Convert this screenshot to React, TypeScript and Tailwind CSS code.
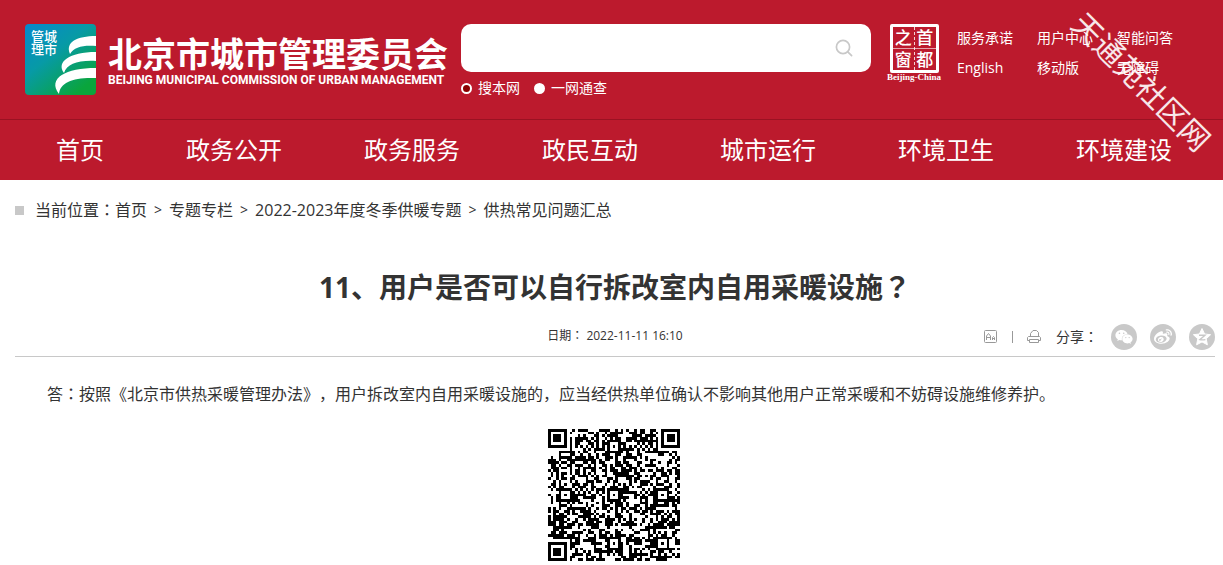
import React from "react";
import { FaWeibo, FaWeixin } from "react-icons/fa";

const NAV = ["首页", "政务公开", "政务服务", "政民互动", "城市运行", "环境卫生", "环境建设"];
const LINKS = ["服务承诺", "用户中心", "智能问答", "English", "移动版", "无障碍"];
const CRUMBS = ["首页", "专题专栏", "2022-2023年度冬季供暖专题", "供热常见问题汇总"];

const QR_SIZE = 49;
const ALIGN = [6, 24, 42];

function finderAt(x: number, y: number, fx: number, fy: number): boolean | null {
  const dx = x - fx;
  const dy = y - fy;
  if (dx < -1 || dx > 7 || dy < -1 || dy > 7) return null;
  const d = Math.max(Math.abs(dx - 3), Math.abs(dy - 3));
  return d === 3 || d < 2;
}

function buildQr(): string {
  let seed = 20221111;
  const cells: string[] = [];
  for (let y = 0; y < QR_SIZE; y++) {
    for (let x = 0; x < QR_SIZE; x++) {
      seed = (Math.imul(seed, 1664525) + 1013904223) >>> 0;
      let dark = (seed >>> 16) % 100 < 51;
      if (x === 6) dark = y % 2 === 0;
      if (y === 6) dark = x % 2 === 0;
      for (const ax of ALIGN) {
        for (const ay of ALIGN) {
          const d = Math.max(Math.abs(x - ax), Math.abs(y - ay));
          if (d <= 2) dark = d !== 1;
        }
      }
      for (const [fx, fy] of [[0, 0], [QR_SIZE - 7, 0], [0, QR_SIZE - 7]]) {
        const f = finderAt(x, y, fx, fy);
        if (f !== null) dark = f;
      }
      if (dark) cells.push(`M${x} ${y}h1v1h-1z`);
    }
  }
  return cells.join("");
}

const QR_PATH = buildQr();

// Full-width colons and question marks sit in the middle of their cell.
function Centered({ children }: { children: string }) {
  return <span className="font-['Noto_Sans_CJK_TC',sans-serif] leading-none">{children}</span>;
}

function Emblem() {
  return (
    <svg viewBox="0 0 71 71" className="size-[71px] shrink-0" aria-hidden="true">
      <defs>
        <linearGradient id="emblem" x1="0" y1="0" x2="0.8" y2="1">
          <stop offset="0" stopColor="#0787cd" />
          <stop offset="0.45" stopColor="#079aa6" />
          <stop offset="0.95" stopColor="#0aa53c" />
        </linearGradient>
        <clipPath id="emblem-clip">
          <rect width="71" height="71" rx="4" />
        </clipPath>
      </defs>
      <g clipPath="url(#emblem-clip)">
        <rect width="71" height="71" fill="url(#emblem)" />
        <g fill="#fff">
          <path d="M45 30C40 18 52 12 71 12V22C58 21 49 23 45 30Z" />
          <path d="M39 49C31 38 44 28 71 28V37C53 36 42 40 39 49Z" />
          <path d="M34 70C22 54 41 44 71 44V54C49 53 35 58 34 70Z" />
        </g>
      </g>
      <g fill="#fff" fontSize="13" fontWeight="500" fontFamily="'Noto Sans CJK SC', sans-serif">
        <text x="6" y="17">管城</text>
        <text x="6" y="30">理市</text>
      </g>
    </svg>
  );
}

function Seal() {
  return (
    <a href="#" className="flex w-14 shrink-0 flex-col items-center text-white">
      <span className="relative grid size-[49px] grid-cols-2 place-items-center rounded-xs border-3 border-white text-[17px] leading-[21px] font-medium">
        <span>之</span>
        <span>首</span>
        <span>窗</span>
        <span>都</span>
        <span className="absolute inset-y-0 left-[21px] border-l border-dashed border-white/80" />
        <span className="absolute inset-x-0 top-[21px] border-t border-white/60" />
      </span>
      <span className="font-['Liberation_Serif',serif] text-[9px] leading-2 font-bold whitespace-nowrap">Beijing-China</span>
    </a>
  );
}

function FontSizeIcon() {
  return (
    <svg viewBox="0 0 14 14" className="size-[14px]" fill="none" stroke="#999">
      <rect x="0.5" y="0.5" width="12" height="12" rx="1" />
      <path d="M2.5 10V6L4.5 3.5L6.5 6V10M2.5 7.5H6.5M8.5 10V7.5L9.5 6.5L10.5 7.5V10M8.5 8.5H10.5" />
    </svg>
  );
}

function PrintIcon() {
  return (
    <svg viewBox="0 0 14 14" className="size-[14px]" fill="none" stroke="#999">
      <path d="M3.5 6.5V3.5L6 0.5H9.5L11.5 2.5V6.5M1.5 6.5H12.5L13.5 7.5V10.5H11.5M1.5 6.5L0.5 7.5V10.5H2.5M2.5 9.5H11.5V12.5H2.5Z" />
    </svg>
  );
}

function QzoneIcon() {
  return (
    <svg viewBox="0 0 20 20" className="size-[20px]">
      <path
        d="M10 1.5L12.6 7L18.6 7.7L14.2 11.8L15.4 17.8L10 14.9L4.6 17.8L5.8 11.8L1.4 7.7L7.4 7Z"
        fill="#fff"
        stroke="#fff"
        strokeLinejoin="round"
      />
      <path d="M7 8.2H13L7.8 12.6Q10 13.2 13.4 12.6" fill="none" stroke="#c9c9c9" strokeWidth="1.4" />
    </svg>
  );
}

function ShareButton({ label, children }: { label: string; children: React.ReactNode }) {
  return (
    <button type="button" aria-label={label} className="flex size-[26px] items-center justify-center rounded-full bg-[#c9c9c9] text-white">
      {children}
    </button>
  );
}

function Scope({ label, checked }: { label: string; checked?: boolean }) {
  return (
    <label className="flex items-center gap-[6px] text-sm leading-4">
      <input
        type="radio"
        name="scope"
        defaultChecked={checked}
        className="size-[11px] appearance-none rounded-full border-2 border-white bg-white checked:bg-[#8b0000]"
      />
      {label}
    </label>
  );
}

export default function App() {
  return (
    <div className="relative overflow-hidden bg-white font-['Open_Sans','Noto_Sans_CJK_SC',sans-serif] text-[#333] [text-spacing-trim:space-all]">
      <header className="bg-[#bc1a2d] text-white">
        <div className="flex h-[119px] items-start pt-6 pl-[25px]">
          <a href="#" className="flex w-[436px] shrink-0 gap-3">
            <Emblem />
            <span className="flex flex-col pt-3 whitespace-nowrap">
              <span className="text-[34px] leading-9 font-bold">北京市城市管理委员会</span>
              <span className="font-['Roboto',sans-serif] text-[12px] leading-4 font-bold">
                BEIJING MUNICIPAL COMMISSION OF URBAN MANAGEMENT
              </span>
            </span>
          </a>
          <form className="w-[410px] shrink-0" onSubmit={(e) => e.preventDefault()}>
            <div className="flex h-12 items-center rounded-[10px] bg-white pr-[18px] pl-4">
              <input type="search" aria-label="搜索" className="min-w-0 flex-1 text-base text-[#333] outline-none" />
              <button type="submit" aria-label="搜索">
                <svg viewBox="0 0 18 18" className="size-[18px]" fill="none" stroke="#c8c8c8" strokeWidth="1.7">
                  <circle cx="8" cy="8" r="6.6" />
                  <path d="M12.8 12.8L16.6 16.6" strokeLinecap="round" />
                </svg>
              </button>
            </div>
            <div className="mt-2 flex gap-[14px]">
              <Scope label="搜本网" checked />
              <Scope label="一网通查" />
            </div>
          </form>
          <div className="ml-[15px] flex gap-[15px]">
            <Seal />
            <ul className="grid grid-cols-[80px_80px_80px] text-sm leading-[30px] whitespace-nowrap">
              {LINKS.map((l) => (
                <li key={l} className="h-[30px]">
                  <a href="#" className="block leading-7">{l}</a>
                </li>
              ))}
            </ul>
          </div>
        </div>
        <nav className="flex h-[61px] border-t border-[#9a1222] px-[15px]">
          {NAV.map((n) => (
            <a key={n} href="#" className="px-[41px] text-2xl leading-[60px] whitespace-nowrap">
              {n}
            </a>
          ))}
        </nav>
      </header>

      <main className="pr-2 pl-[15px]">
        <div className="flex h-[60px] items-center text-base">
          <span className="mr-[11px] size-[9px] bg-[#c8c8c8]" />
          <span>当前位置<Centered>：</Centered></span>
          {CRUMBS.map((c, i) => (
            <React.Fragment key={c}>
              {i > 0 && <span className="mx-[7px] text-sm">&gt;</span>}
              <a href="#">{c}</a>
            </React.Fragment>
          ))}
        </div>

        <article>
          <h1 className="mt-6 text-center text-[28px] leading-[46px] font-bold">
            11、用户是否可以自行拆改室内自用采暖设施<Centered>？</Centered>
          </h1>
          <div className="mt-[6px] grid h-[41px] grid-cols-[1fr_auto_1fr] items-center border-b border-[#c8c8c8]">
            <span />
            <span className="text-xs">日期<Centered>：</Centered> 2022-11-11 16:10</span>
            <div className="flex items-center justify-end pt-px">
              <button type="button" aria-label="字号"><FontSizeIcon /></button>
              <span className="mx-[14px] h-3 w-px bg-[#999]" />
              <button type="button" aria-label="打印"><PrintIcon /></button>
              <span className="mr-[13px] ml-[15px] text-sm">分享<Centered>：</Centered></span>
              <div className="flex gap-[13px]">
                <ShareButton label="微信"><FaWeixin size={18} /></ShareButton>
                <ShareButton label="微博"><FaWeibo size={18} /></ShareButton>
                <ShareButton label="QQ空间"><QzoneIcon /></ShareButton>
              </div>
            </div>
          </div>
          <p className="mt-6 indent-8 text-base leading-[26px]">
            答<Centered>：</Centered>按照《北京市供热采暖管理办法》，用户拆改室内自用采暖设施的，应当经供热单位确认不影响其他用户正常采暖和不妨碍设施维修养护。
          </p>
          <div className="flex justify-center pt-[22px] pr-[2px] pb-1">
            <svg
              viewBox={`0 0 ${QR_SIZE} ${QR_SIZE}`}
              className="size-[132px]"
              shapeRendering="crispEdges"
              role="img"
              aria-label="二维码"
            >
              <path d={QR_PATH} fill="#000" />
            </svg>
          </div>
        </article>
      </main>

      <div className="pointer-events-none absolute top-[62px] left-[1051px] rotate-45 text-[30px] leading-10 whitespace-nowrap text-white/90">
        天通苑社区网
      </div>
    </div>
  );
}
